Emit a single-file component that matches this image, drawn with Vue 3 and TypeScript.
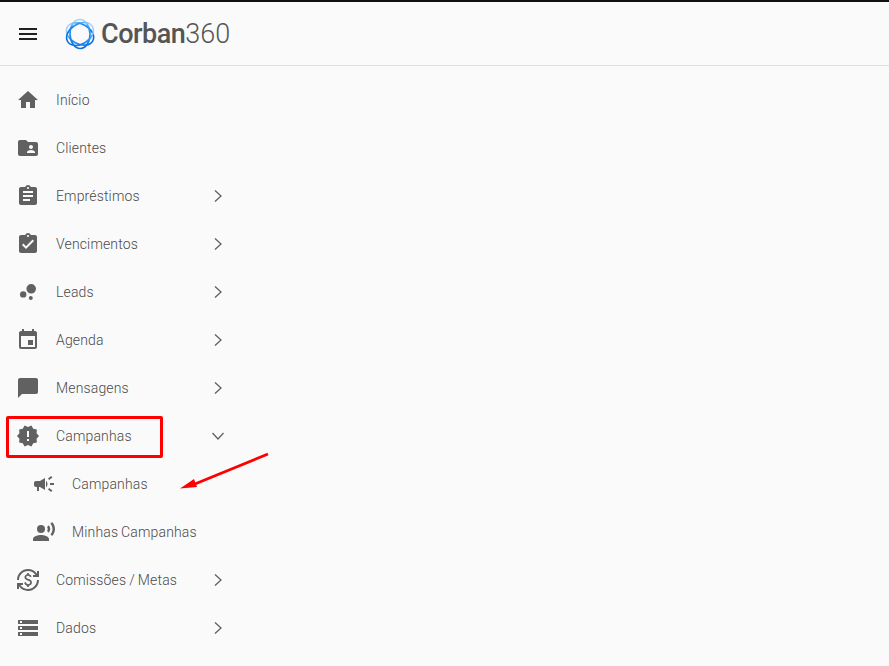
<script setup lang="ts">
interface Item {
  label: string
  paths: string[]
  arrow?: 'right' | 'down'
  nested?: boolean
}

const menu = 'M3 18h18v-2H3v2zm0-5h18v-2H3v2zm0-7v2h18V6H3z'

const items: Item[] = [
  { label: 'Início', paths: ['M10 20v-6h4v6h5v-8h3L12 3 2 12h3v8z'] },
  { label: 'Clientes', paths: ['M20 6h-8l-2-2H4c-1.1 0-1.99.9-1.99 2L2 18c0 1.1.9 2 2 2h16c1.1 0 2-.9 2-2V8c0-1.1-.9-2-2-2zm-5 3c1.1 0 2 .9 2 2s-.9 2-2 2-2-.9-2-2 .9-2 2-2zm4 8h-8v-1c0-1.33 2.67-2 4-2s4 .67 4 2v1z'] },
  { label: 'Empréstimos', arrow: 'right', paths: ['M19 3h-4.18C14.4 1.84 13.3 1 12 1c-1.3 0-2.4.84-2.82 2H5c-1.1 0-2 .9-2 2v14c0 1.1.9 2 2 2h14c1.1 0 2-.9 2-2V5c0-1.1-.9-2-2-2zm-7 0c.55 0 1 .45 1 1s-.45 1-1 1-1-.45-1-1 .45-1 1-1zm2 14H7v-2h7v2zm3-4H7v-2h10v2zm0-4H7V7h10v2z'] },
  { label: 'Vencimentos', arrow: 'right', paths: ['M19 3h-4.18C14.4 1.84 13.3 1 12 1c-1.3 0-2.4.84-2.82 2H5c-1.1 0-2 .9-2 2v14c0 1.1.9 2 2 2h14c1.1 0 2-.9 2-2V5c0-1.1-.9-2-2-2zm-7 0c.55 0 1 .45 1 1s-.45 1-1 1-1-.45-1-1 .45-1 1-1zm-2 14l-4-4 1.41-1.41L10 14.17l6.59-6.59L18 9l-8 8z'] },
  { label: 'Leads', arrow: 'right', paths: ['M7.2 11.2a3.2 3.2 0 1 0 0 6.4 3.2 3.2 0 1 0 0-6.4z', 'M14.8 16a2 2 0 1 0 0 4 2 2 0 1 0 0-4z', 'M15.2 4a4.8 4.8 0 1 0 0 9.6 4.8 4.8 0 1 0 0-9.6z'] },
  { label: 'Agenda', arrow: 'right', paths: ['M17 12h-5v5h5v-5zM16 1v2H8V1H6v2H5c-1.11 0-1.99.9-1.99 2L3 19c0 1.1.89 2 2 2h14c1.1 0 2-.9 2-2V5c0-1.1-.9-2-2-2h-1V1h-2zm3 18H5V8h14v11z'] },
  { label: 'Mensagens', arrow: 'right', paths: ['M20 2H4c-1.1 0-2 .9-2 2v18l4-4h14c1.1 0 2-.9 2-2V4c0-1.1-.9-2-2-2z'] },
  { label: 'Campanhas', arrow: 'down', paths: ['M23 12l-2.44-2.78.34-3.68-3.61-.82-1.89-3.18L12 3 8.6 1.54 6.71 4.72l-3.61.81.34 3.68L1 12l2.44 2.78-.34 3.69 3.61.82 1.89 3.18L12 21l3.4 1.46 1.89-3.18 3.61-.82-.34-3.68L23 12zm-10 5h-2v-2h2v2zm0-4h-2V7h2v6z'] },
  { label: 'Campanhas', nested: true, paths: ['M18 11v2h4v-2h-4zm-2 6.61c.96.71 2.21 1.65 3.2 2.39.4-.53.8-1.07 1.2-1.6-.99-.74-2.24-1.68-3.2-2.4-.4.54-.8 1.08-1.2 1.61zM20.4 5.6c-.4-.53-.8-1.07-1.2-1.6-.99.74-2.24 1.68-3.2 2.4.4.53.8 1.07 1.2 1.6.96-.72 2.21-1.65 3.2-2.4zM4 9c-1.1 0-2 .9-2 2v2c0 1.1.9 2 2 2h1v4h2v-4h1l5 3V6L8 9H4zm11.5 3c0-1.33-.58-2.53-1.5-3.35v6.69c.92-.81 1.5-2.01 1.5-3.34z'] },
  { label: 'Minhas Campanhas', nested: true, paths: ['M9 5a4 4 0 1 0 0 8 4 4 0 1 0 0-8z', 'M9 15c-2.67 0-8 1.34-8 4v2h16v-2c0-2.66-5.33-4-8-4zm7.76-9.64l-1.68 1.69c.84 1.18.84 2.71 0 3.89l1.68 1.69c2.02-2.02 2.02-5.07 0-7.27zM20.07 2l-1.63 1.63c2.77 3.02 2.77 7.56 0 10.74L20.07 16c3.9-3.89 3.91-9.95 0-14z'] },
  { label: 'Comissões / Metas', arrow: 'right', paths: ['M12.89 11.1c-1.78-.59-2.64-.96-2.64-1.9 0-1.02 1.11-1.39 1.81-1.39 1.31 0 1.79.99 1.9 1.34l1.58-.67c-.15-.44-.82-1.91-2.66-2.23V5h-1.75v1.26c-2.6.56-2.62 2.85-2.62 2.96 0 2.27 2.25 2.91 3.35 3.31 1.58.56 2.28 1.07 2.28 2.03 0 1.13-1.05 1.61-1.98 1.61-1.82 0-2.34-1.87-2.4-2.09l-1.66.67c.63 2.19 2.28 2.78 3.02 2.96V19h1.75v-1.24c.52-.09 3.02-.59 3.02-3.22.01-1.39-.6-2.61-3-3.44zM3 21H1v-6h6v2H4.52c1.61 2.41 4.36 4 7.48 4 4.97 0 9-4.03 9-9h2c0 6.08-4.92 11-11 11-3.72 0-7.01-1.85-9-4.67V21zm-2-9C1 5.92 5.92 1 12 1c3.72 0 7.01 1.85 9 4.67V3h2v6h-6V7h2.48C17.87 4.59 15.12 3 12 3c-4.97 0-9 4.03-9 9H1z'] },
  { label: 'Dados', arrow: 'right', paths: ['M2 20h20v-4H2v4zm2-3h2v2H4v-2zM2 4v4h20V4H2zm4 3H4V5h2v2zm-4 7h20v-4H2v4zm2-3h2v2H4v-2z'] },
]
</script>

<template>
  <div class="page">
    <header class="topbar">
      <svg class="menu-icon" viewBox="0 0 24 24" width="24" height="24"><path :d="menu" /></svg>
      <div class="brand">
        <svg class="logo" viewBox="0 0 32 32" width="32" height="32">
          <defs>
            <linearGradient id="ringBlue" gradientUnits="userSpaceOnUse" x1="2" y1="16" x2="30" y2="16">
              <stop offset="0" stop-color="#a9d4fa" />
              <stop offset="0.3" stop-color="#2b96f3" />
              <stop offset="1" stop-color="#0a6ee0" />
            </linearGradient>
          </defs>
          <g fill="none" stroke="url(#ringBlue)" stroke-width="1.6">
            <ellipse cx="16" cy="16" rx="14.500" ry="10" transform="rotate(28 16 16)" />
            <ellipse cx="16" cy="16" rx="14.500" ry="10" transform="rotate(88 16 16)" />
            <ellipse cx="16" cy="16" rx="14.500" ry="10" transform="rotate(148 16 16)" />
          </g>
        </svg>
        <span class="wordmark"><span class="word-strong">Corban</span><span class="word-light">360</span></span>
      </div>
    </header>

    <nav class="nav">
      <div v-for="item in items" :key="item.label + item.nested" class="row" :class="{ nested: item.nested }">
        <span class="icon-slot">
          <svg class="icon" viewBox="0 0 24 24" width="24" height="24">
            <path v-for="d in item.paths" :key="d" :d="d" />
          </svg>
        </span>
        <span class="label">{{ item.label }}</span>
        <svg v-if="item.arrow === 'right'" class="chevron" viewBox="0 0 24 24" width="24" height="24">
          <path d="M9 6.500l6 5.500-6 5.500" />
        </svg>
        <svg v-else-if="item.arrow === 'down'" class="chevron" viewBox="0 0 24 24" width="24" height="24">
          <path d="M6.500 9l5.500 6 5.500-6" />
        </svg>
      </div>
    </nav>

    <div class="mark-box"></div>
    <svg class="mark-arrow" viewBox="0 0 100 50" width="100" height="50">
      <path d="M98 4L20 36" />
      <polygon points="10,38.500 24,29 27,37" />
    </svg>
  </div>
</template>

<style scoped>
.page {
  position: relative;
  min-height: 666px;
  background: #fafafa;
  border-top: 2px solid #111;
  box-sizing: border-box;
  overflow: hidden;
  font-family: Roboto, "Liberation Sans", sans-serif;
}
.topbar {
  height: 63px;
  display: flex;
  align-items: center;
  padding-left: 16px;
  gap: 24px;
  border-bottom: 1px solid #e0e0e0;
  box-sizing: content-box;
}
.menu-icon { fill: #212121; flex: none; }
.brand { display: flex; align-items: center; gap: 5px; }
.logo { flex: none; }
.wordmark { font-size: 27px; line-height: 32px; color: #555; white-space: nowrap; }
.word-strong { font-weight: 500; letter-spacing: -0.5px; }
.word-light { font-weight: 300; }
.nav { padding-top: 10px; width: 240px; }
.row {
  height: 48px;
  display: flex;
  align-items: center;
  padding: 0 10px 0 16px;
  box-sizing: border-box;
}
.row.nested { padding-left: 32px; }
.icon-slot { width: 40px; flex: none; display: flex; align-items: center; }
.icon { fill: #616161; display: block; }
.label { flex: 1; font-size: 14px; font-weight: 300; line-height: 20px; color: #4a4a4a; letter-spacing: 0.15px; word-spacing: -0.6px; white-space: nowrap; }
.chevron { fill: none; stroke: #616161; stroke-width: 1.3; flex: none; }
.mark-box {
  position: absolute;
  left: 6px;
  top: 414px;
  width: 157px;
  height: 42px;
  border: 3px solid #f00;
  border-radius: 2px;
  box-sizing: border-box;
}
.mark-arrow { position: absolute; left: 170px; top: 448px; }
.mark-arrow path { fill: none; stroke: #f00; stroke-width: 2.8; }
.mark-arrow polygon { fill: #f00; }
</style>
<style>
html, body { margin: 0; background: #fafafa; }
</style>
